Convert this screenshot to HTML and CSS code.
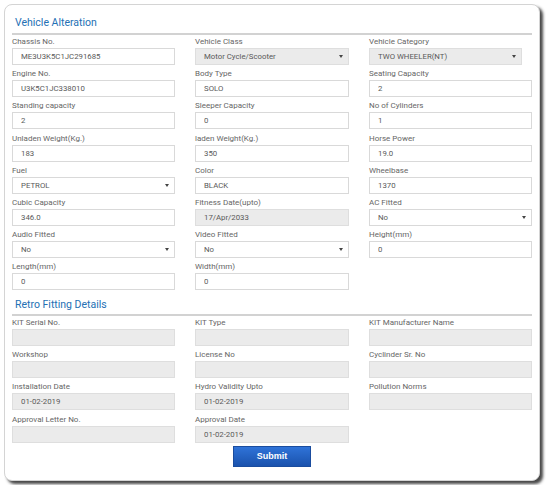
FILE: index.html
```html
<!DOCTYPE html>
<html>
<head>
  <meta charset="utf-8">
  <title>Vehicle Alteration</title>
  <link rel="stylesheet" href="styles.css">
</head>
<body>
  <div class="card">
    <h2 class="section-title first">Vehicle Alteration</h2>
    <div class="form-grid">
      <div class="field">
        <label>Chassis No.</label>
        <input type="text" value="ME3U3K5C1JC291685">
      </div>
      <div class="field">
        <label>Vehicle Class</label>
        <div class="select disabled">
          <select disabled><option>Motor Cycle/Scooter</option></select>
        </div>
      </div>
      <div class="field">
        <label>Vehicle Category</label>
        <div class="select disabled narrow">
          <select disabled><option>TWO WHEELER(NT)</option></select>
        </div>
      </div>

      <div class="field">
        <label>Engine No.</label>
        <input type="text" value="U3K5C1JC338010">
      </div>
      <div class="field">
        <label>Body Type</label>
        <input type="text" value="SOLO">
      </div>
      <div class="field">
        <label>Seating Capacity</label>
        <input type="text" value="2">
      </div>

      <div class="field">
        <label>Standing capacity</label>
        <input type="text" value="2">
      </div>
      <div class="field">
        <label>Sleeper Capacity</label>
        <input type="text" value="0">
      </div>
      <div class="field">
        <label>No of Cylinders</label>
        <input type="text" value="1">
      </div>

      <div class="field">
        <label>Unladen Weight(Kg.)</label>
        <input type="text" value="183">
      </div>
      <div class="field">
        <label>laden Weight(Kg.)</label>
        <input type="text" value="350">
      </div>
      <div class="field">
        <label>Horse Power</label>
        <input type="text" value="19.0">
      </div>

      <div class="field">
        <label>Fuel</label>
        <div class="select">
          <select><option>PETROL</option></select>
        </div>
      </div>
      <div class="field">
        <label>Color</label>
        <input type="text" value="BLACK">
      </div>
      <div class="field">
        <label>Wheelbase</label>
        <input type="text" value="1370">
      </div>

      <div class="field">
        <label>Cubic Capacity</label>
        <input type="text" value="346.0">
      </div>
      <div class="field">
        <label>Fitness Date(upto)</label>
        <input type="text" value="17/Apr/2033" disabled>
      </div>
      <div class="field">
        <label>AC Fitted</label>
        <div class="select">
          <select><option>No</option></select>
        </div>
      </div>

      <div class="field">
        <label>Audio Fitted</label>
        <div class="select">
          <select><option>No</option></select>
        </div>
      </div>
      <div class="field">
        <label>Video Fitted</label>
        <div class="select">
          <select><option>No</option></select>
        </div>
      </div>
      <div class="field">
        <label>Height(mm)</label>
        <input type="text" value="0">
      </div>

      <div class="field">
        <label>Length(mm)</label>
        <input type="text" value="0">
      </div>
      <div class="field">
        <label>Width(mm)</label>
        <input type="text" value="0">
      </div>
    </div>

    <h2 class="section-title">Retro Fitting Details</h2>
    <div class="form-grid">
      <div class="field">
        <label>KIT Serial No.</label>
        <input type="text" disabled>
      </div>
      <div class="field">
        <label>KIT Type</label>
        <input type="text" disabled>
      </div>
      <div class="field">
        <label>KIT Manufacturer Name</label>
        <input type="text" disabled>
      </div>

      <div class="field">
        <label>Workshop</label>
        <input type="text" disabled>
      </div>
      <div class="field">
        <label>License No</label>
        <input type="text" disabled>
      </div>
      <div class="field">
        <label>Cyclinder Sr. No</label>
        <input type="text" disabled>
      </div>

      <div class="field">
        <label>Installation Date</label>
        <input type="text" value="01-02-2019" disabled>
      </div>
      <div class="field">
        <label>Hydro Validity Upto</label>
        <input type="text" value="01-02-2019" disabled>
      </div>
      <div class="field">
        <label>Pollution Norms</label>
        <input type="text" disabled>
      </div>

      <div class="field">
        <label>Approval Letter No.</label>
        <input type="text" disabled>
      </div>
      <div class="field">
        <label>Approval Date</label>
        <input type="text" value="01-02-2019" disabled>
      </div>
    </div>

    <div class="actions">
      <button class="submit-button" type="button">Submit</button>
    </div>
  </div>
</body>
</html>
```

FILE: styles.css
```css
* {
  margin: 0;
  padding: 0;
  box-sizing: border-box;
}
body {
  font-family: Roboto, "Liberation Sans", sans-serif;
  background: #fff;
  color: #555;
  padding: 4px;
}
.card {
  width: 536px;
  background: #fff;
  border: 1px solid #d4d4d4;
  border-radius: 8px;
  padding: 0 7px 13px;
  box-shadow: 3px 3px 3px rgba(40, 40, 40, 0.85);
}
.section-title {
  font-size: 10.5px;
  font-weight: 400;
  line-height: 16px;
  color: #2470b4;
  padding: 2px 3px 1.5px;
  margin-top: 2px;
  border-bottom: 2px solid #d2d2d2;
}
.section-title.first {
  margin-top: 0;
  padding-top: 10px;
  padding-bottom: 2px;
}
.form-grid {
  display: grid;
  grid-template-columns: 163px 154px 163px;
  column-gap: 20px;
}
.field {
  display: flex;
  flex-direction: column;
  margin-bottom: 2.2px;
}
.field label {
  font-size: 8px;
  line-height: 13px;
  color: #666;
}
.field input,
.select select {
  display: block;
  width: 100%;
  height: 17px;
  border: 1px solid #d9d9d9;
  background: #fff;
  font-family: inherit;
  font-size: 7.8px;
  color: #595959;
  padding: 0 8px;
  outline: none;
}
.field input:disabled,
.select.disabled select {
  background: #ebebeb;
  border-color: #dedede;
  opacity: 1;
}
.select {
  position: relative;
}
.select.narrow {
  width: 153px;
}
.select select {
  -webkit-appearance: none;
  appearance: none;
  padding-left: 8px;
  border-radius: 0;
}
.select::after {
  content: '';
  position: absolute;
  right: 6px;
  top: 7px;
  border-left: 2px solid transparent;
  border-right: 2px solid transparent;
  border-top: 3px solid #444;
}
.actions {
  display: flex;
  justify-content: center;
  padding-top: 1px;
}
.submit-button {
  width: 78px;
  height: 21px;
  border: 1px solid #1a4c9e;
  background: linear-gradient(#2f73d8, #1a52ad);
  color: #fff;
  font-family: "Liberation Sans", Arial, sans-serif;
  font-size: 9px;
  font-weight: 700;
  cursor: pointer;
}
```
